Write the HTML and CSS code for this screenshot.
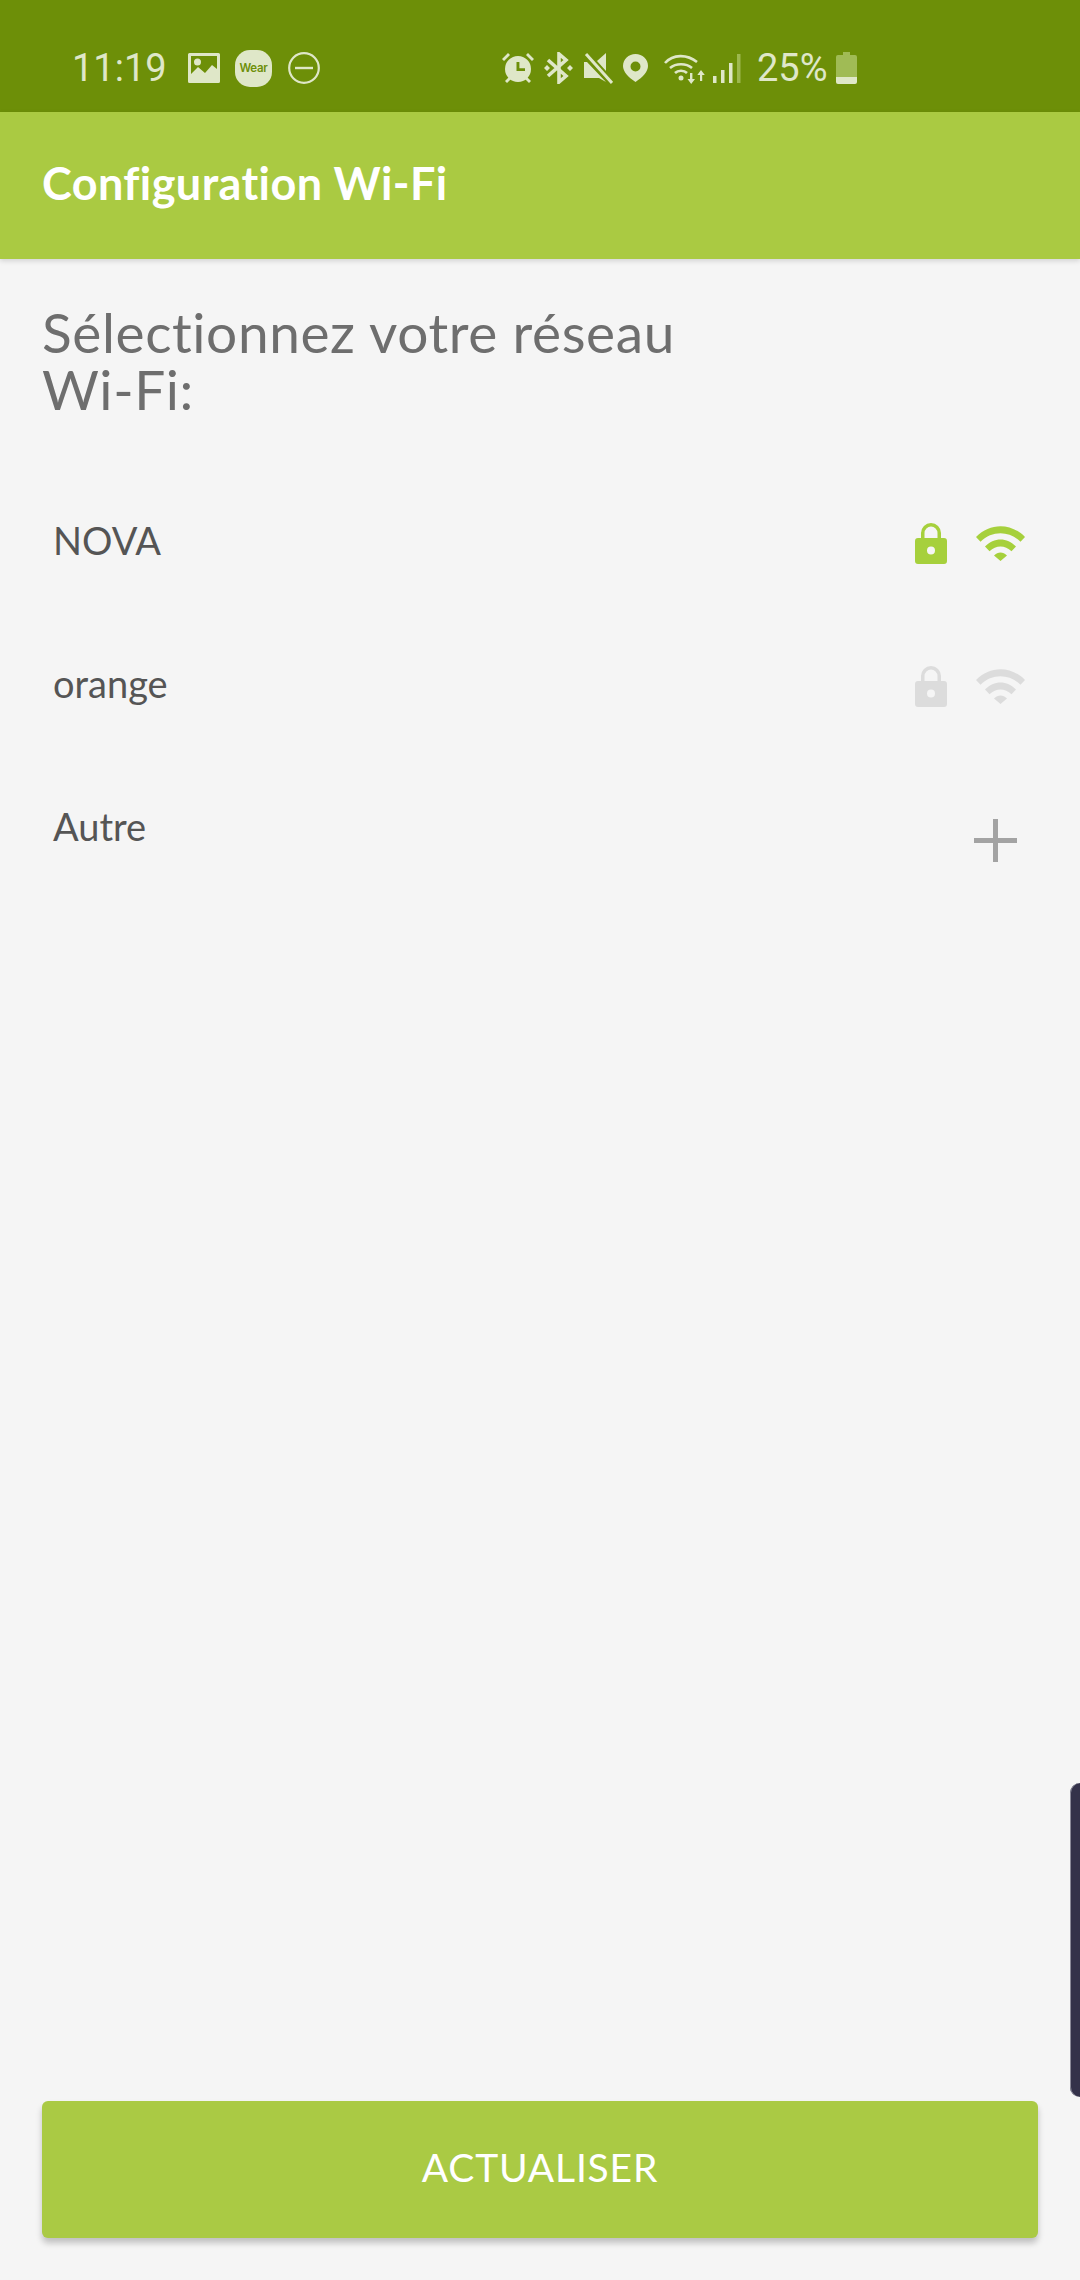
FILE: index.html
```html
<!DOCTYPE html>
<html lang="fr">
<head>
<meta charset="utf-8">
<title>Configuration Wi-Fi</title>
<link rel="stylesheet" href="styles.css">
</head>
<body>
<div class="page">
  <header class="status">
    <div class="status-left">
      <span class="time">11:19</span>
      <svg class="ic-image" viewBox="0 0 32 30"><path fill-rule="evenodd" d="M1.500 0h29A1.500 1.500 0 0 1 32 1.500v27a1.500 1.500 0 0 1-1.500 1.500h-29A1.500 1.500 0 0 1 0 28.500v-27A1.500 1.500 0 0 1 1.500 0zM3 3v18l7-7 7 6 7-8 5 4V3zM9.500 5.500a3.500 3.500 0 1 1 0 7 3.500 3.500 0 0 1 0-7z" fill="#dfe7c8"/></svg>
      <span class="wear">Wear</span>
      <svg class="ic-dnd" viewBox="0 0 32 32"><circle cx="16" cy="16" r="14.800" fill="none" stroke="#dfe7c8" stroke-width="2.200"/><rect x="7" y="14.800" width="18" height="2.400" fill="#dfe7c8"/></svg>
    </div>
    <div class="status-right">
      <svg class="ic-alarm" viewBox="0 0 32 30"><g fill="#dfe7c8"><path d="M0 6 6 0l2 2-6 6zM32 6l-6-6-2 2 6 6z"/><path d="M7 24l-4 4 2 2 4-4zM25 24l4 4-2 2-4-4z"/><path fill-rule="evenodd" d="M16 3a13 13 0 1 1 0 26 13 13 0 0 1 0-26zM14.500 9v9H23v-2.800h-5.600V9z"/></g></svg>
      <svg class="ic-bt" viewBox="0 0 29 32"><g fill="none" stroke="#dfe7c8" stroke-width="3.600"><path d="M4 8l18 16-7 6V2l7 6L4 24"/></g><path d="M0 16l3-3 3 3-3 3zM23 16l3-3 3 3-3 3z" fill="#dfe7c8"/></svg>
      <svg class="ic-mute" viewBox="0 0 29 31"><path d="M0 9h3l19 20-7-4H0zM13 8l9-8v18z" fill="#dfe7c8"/><path d="M2 1l26 29" stroke="#dfe7c8" stroke-width="3"/></svg>
      <svg class="ic-loc" viewBox="0 0 25 28"><path fill-rule="evenodd" d="M12.500 0C19.500 0 25 5.300 25 12c0 5.500-5 11-12.500 16C5 23 0 17.500 0 12 0 5.300 5.500 0 12.500 0zm0 7.500a5 5 0 1 0 0 10 5 5 0 0 0 0-10z" fill="#dfe7c8"/></svg>
      <svg class="ic-swifi" viewBox="0 0 42 31"><g fill="none" stroke="#dfe7c8" stroke-width="2.600"><path d="M1 10C9 1 23 1 33 9"/><path d="M6 15c6-5 16-5 22 0"/><path d="M11 20c3-3 9-3 12 0"/></g><circle cx="17" cy="25" r="2.500" fill="#dfe7c8"/><path d="M26 20h2.400v6H31l-3.800 5-3.700-5H26zM37 17l3.800 5H38.200v6H36v-6h-2.700z" fill="#dfe7c8"/></svg>
      <svg class="ic-signal" viewBox="0 0 28 29"><rect x="0" y="22" width="3.500" height="7" fill="#dfe7c8"/><rect x="8" y="16" width="3.500" height="13" fill="#dfe7c8"/><rect x="16" y="9" width="3.500" height="20" fill="#dfe7c8"/><rect x="24" y="0" width="3.500" height="29" fill="#9db84f"/></svg>
      <span class="pct">25%</span>
      <svg class="ic-batt" viewBox="0 0 21 32"><path d="M7 0h7v3h5a2 2 0 0 1 2 2v20H0V5a2 2 0 0 1 2-2h5z" fill="#a0bb55"/><path d="M0 25h21v5a2 2 0 0 1-2 2H2a2 2 0 0 1-2-2z" fill="#dfe7c8"/></svg>
    </div>
  </header>

  <div class="appbar"><h1 class="title">Configuration Wi-Fi</h1></div>

  <main class="content">
    <h2 class="heading">Sélectionnez votre réseau<br>Wi-Fi:</h2>
    <ul class="networks">
      <li class="row">
        <span class="name">NOVA</span>
        <span class="icons on">
          <svg class="lock" viewBox="0 0 32 42"><path fill-rule="evenodd" d="M6 16V11a10 10 0 0 1 20 0v5h3a3 3 0 0 1 3 3v20a3 3 0 0 1-3 3H3a3 3 0 0 1-3-3V19a3 3 0 0 1 3-3zM9.500 16h13v-5a6.500 6.500 0 0 0-13 0zM16 24.500a4 4 0 1 0 0 8 4 4 0 0 0 0-8z"/></svg>
          <svg class="wifi" viewBox="0 0 49 35"><path d="M0 11C14-3.500 35-3.500 49 11l-4.500 4.800C33 4.500 16 4.500 4.500 15.800zM9 20.500C18 11 31 11 40 20.500l-4.500 4.800C29 19 20 19 13.500 25.300zM18 29.500c4-4 9-4 13 0L24.500 35z"/></svg>
        </span>
      </li>
      <li class="row">
        <span class="name">orange</span>
        <span class="icons off">
          <svg class="lock" viewBox="0 0 32 42"><path fill-rule="evenodd" d="M6 16V11a10 10 0 0 1 20 0v5h3a3 3 0 0 1 3 3v20a3 3 0 0 1-3 3H3a3 3 0 0 1-3-3V19a3 3 0 0 1 3-3zM9.500 16h13v-5a6.500 6.500 0 0 0-13 0zM16 24.500a4 4 0 1 0 0 8 4 4 0 0 0 0-8z"/></svg>
          <svg class="wifi" viewBox="0 0 49 35"><path d="M0 11C14-3.500 35-3.500 49 11l-4.500 4.800C33 4.500 16 4.500 4.500 15.800zM9 20.500C18 11 31 11 40 20.500l-4.500 4.800C29 19 20 19 13.500 25.300zM18 29.500c4-4 9-4 13 0L24.500 35z"/></svg>
        </span>
      </li>
      <li class="row">
        <span class="name">Autre</span>
        <svg class="plus" viewBox="0 0 43 43"><path d="M19 0h5v19h19v5H24v19h-5V24H0v-5h19z"/></svg>
      </li>
    </ul>
  </main>

  <div class="footer"><button class="refresh">ACTUALISER</button></div>
  <div class="edge-panel"></div>
</div>
</body>
</html>
```

FILE: styles.css
```css
* { box-sizing: border-box; }
html, body { margin: 0; padding: 0; }
body { background: #f5f5f5; font-family: Lato, "Open Sans", sans-serif; }
.page { position: relative; width: 1080px; height: 2280px; display: flex; flex-direction: column; overflow: hidden; }

.status { height: 112px; background: #6d8f08; display: flex; align-items: flex-start; padding: 48px 0 0 72px; color: #dfe7c8; flex: none; }
.status-left { display: flex; align-items: center; width: 430px; height: 40px; }
.status-right { display: flex; align-items: center; height: 40px; }
.time { font: 400 38px Roboto, sans-serif; width: 94px; margin-top: -1px; }
.pct { font: 400 38px Roboto, sans-serif; width: 70px; margin: 0 9px 0 16px; }
.ic-image { width: 32px; height: 30px; margin: 0 15px 0 22px; }
.wear { width: 37px; height: 37px; border-radius: 15px; background: #dfe7c8; color: #6d8f08; font: 600 11.5px Inter, sans-serif; display: flex; align-items: center; justify-content: center; margin-right: 16px; letter-spacing: -0.3px; }
.ic-dnd { width: 32px; height: 32px; }
.ic-alarm { width: 32px; height: 30px; margin-right: 10px; }
.ic-bt { width: 29px; height: 32px; margin-right: 11px; }
.ic-mute { width: 29px; height: 31px; margin-right: 10px; }
.ic-loc { width: 25px; height: 28px; margin-right: 16px; }
.ic-swifi { width: 42px; height: 31px; margin-right: 7px; }
.ic-signal { width: 28px; height: 29px; }
.ic-batt { width: 21px; height: 32px; }

.appbar { height: 147px; background: #aaca42; display: flex; align-items: center; padding: 0 0 5px 42px; flex: none; box-shadow: 0 2px 5px rgba(0,0,0,.14); position: relative; }
.title { margin: 0; font-size: 45px; font-weight: 700; color: #fff; line-height: 1; letter-spacing: .4px; }

.content { flex: 1; padding: 45px 0 0; }
.heading { margin: 0 0 0 42px; font-size: 55px; line-height: 57px; font-weight: 400; color: #6e6e6e; letter-spacing: .6px; }
.networks { list-style: none; margin: 100px 0 0; padding: 0 0 0 53px; }
.row { height: 143px; display: flex; justify-content: space-between; padding-right: 55px; }
.name { font-size: 38px; line-height: 44px; font-weight: 400; color: #555; }
.icons { display: flex; align-items: flex-start; gap: 29px; margin-top: 4px; }
.lock { width: 32px; height: 42px; }
.wifi { width: 49px; height: 35px; margin-top: 4px; }
.on svg { fill: #a6d03c; }
.off svg { fill: #dcdcdc; }
.plus { width: 43px; height: 43px; fill: #a3a3a3; margin: 15px 8px 0 0; }

.footer { padding: 0 42px 42px; flex: none; }
.refresh { display: block; width: 100%; height: 137px; border: 0; border-radius: 6px; background: #aaca44; color: #fff; font: 400 39px Lato, sans-serif; letter-spacing: .8px; box-shadow: 0 5px 6px rgba(0,0,0,.22); padding: 0 0 5px; }

.edge-panel { position: absolute; left: 1070px; top: 1783px; width: 10px; height: 314px; background: #34324a; border-radius: 12px 0 0 12px; box-shadow: inset 1px 0 0 #8a8998; }
```
